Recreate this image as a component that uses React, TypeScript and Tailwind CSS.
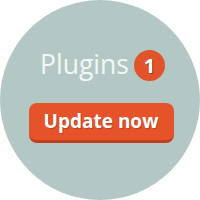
export default function App() {
  return (
    <div className="w-[200px] h-[200px] bg-white">
      <div
        className="w-[200px] h-[200px] rounded-full bg-[#b3c8c5] flex flex-col items-center pt-[50px]"
        style={{ fontFamily: '"Open Sans", sans-serif' }}
      >
        <div className="flex items-center gap-[5px] h-[31px] pl-[5px]">
          <span className="text-[26.5px] leading-none text-[#f2f6f5] pb-[2px]">Plugins</span>
          <span className="w-[31px] h-[31px] rounded-full bg-[#e1532b] flex items-center justify-center text-white text-[20px] font-bold leading-none [text-shadow:1px_1px_0_rgba(0,0,0,0.35)]">
            1
          </span>
        </div>
        <button className="mt-[22px] ml-[2px] w-[145px] h-[40px] rounded-[8px] bg-[#e5532a] border-b-[3px] border-[#c23f1c] flex items-center justify-center text-white text-[19px] font-bold leading-none [text-shadow:1px_1px_0_rgba(0,0,0,0.2)]">
          Update now
        </button>
      </div>
    </div>
  );
}
